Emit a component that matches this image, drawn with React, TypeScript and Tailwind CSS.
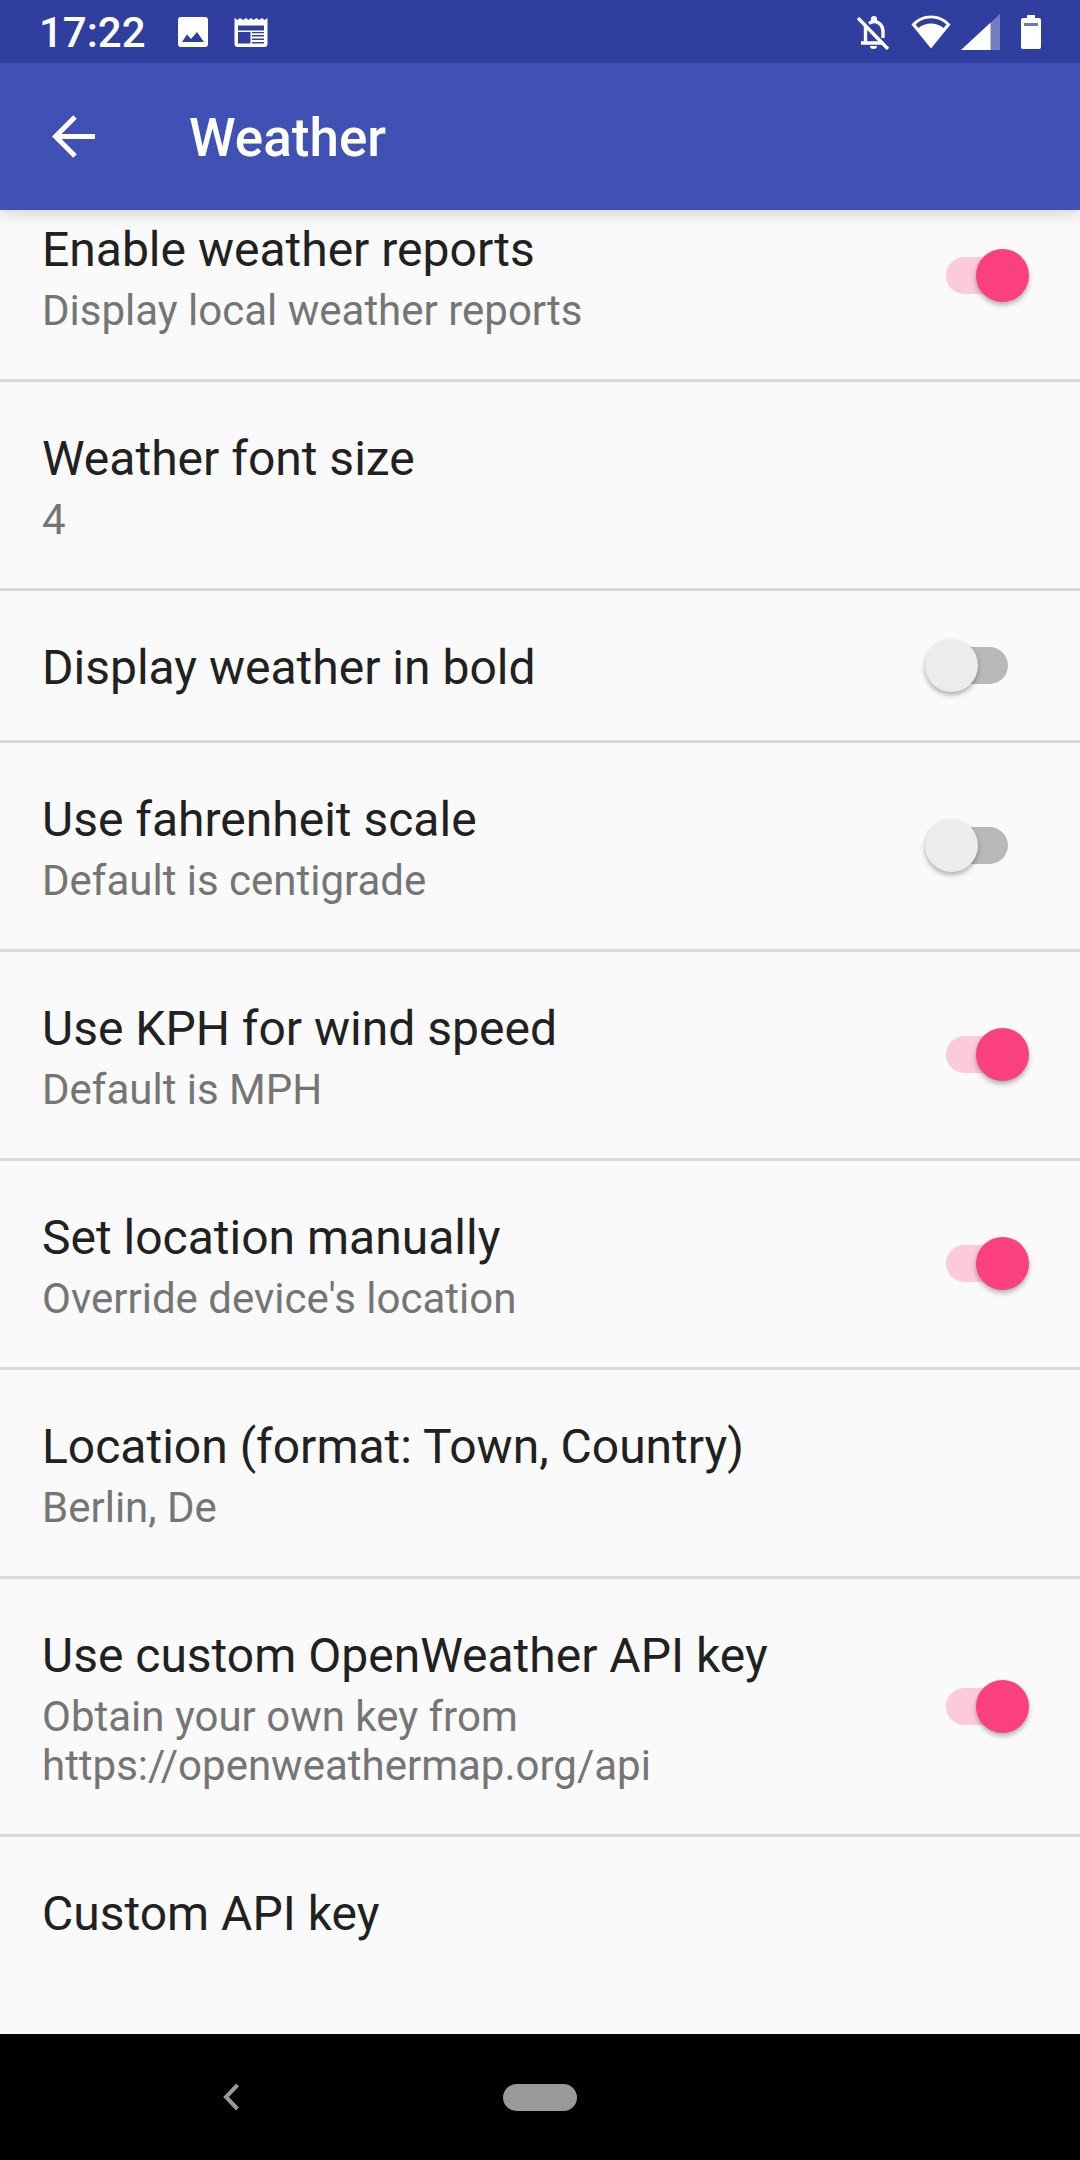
import { useLayoutEffect, useRef } from "react";

type Preference = {
  id: string;
  title: string;
  summary?: string;
  link?: string;
  checked?: boolean;
};

const preferences: Preference[] = [
  { id: "enable", title: "Enable weather reports", summary: "Display local weather reports", checked: true },
  { id: "font-size", title: "Weather font size", summary: "4" },
  { id: "bold", title: "Display weather in bold", checked: false },
  { id: "fahrenheit", title: "Use fahrenheit scale", summary: "Default is centigrade", checked: false },
  { id: "kph", title: "Use KPH for wind speed", summary: "Default is MPH", checked: true },
  { id: "manual", title: "Set location manually", summary: "Override device's location", checked: true },
  { id: "location", title: "Location (format: Town, Country)", summary: "Berlin, De" },
  {
    id: "custom-key",
    title: "Use custom OpenWeather API key",
    summary: "Obtain your own key from ",
    link: "https://openweathermap.org/api",
    checked: true,
  },
  { id: "api-key", title: "Custom API key" },
];

// Distance the list is scrolled when the screen opens.
const INITIAL_SCROLL = 37;

function StatusBar() {
  return (
    <div className="relative z-20 flex h-[63px] shrink-0 items-center bg-[#303f9f] pr-[39px] pl-[39px] text-white">
      <span className="pt-[2px] text-[42px] leading-[61px] font-medium">17:22</span>
      <svg className="ml-8 h-[30px] w-[30px]" viewBox="0 0 30 30" fill="currentColor" aria-hidden="true">
        <path
          fillRule="evenodd"
          d="M3 0h24a3 3 0 0 1 3 3v24a3 3 0 0 1-3 3H3a3 3 0 0 1-3-3V3a3 3 0 0 1 3-3ZM4 25h22l-7-10-6 7-4-4.500Z"
        />
      </svg>
      <svg className="ml-[26px] h-[30px] w-[34px]" viewBox="0 0 34 30" fill="currentColor" aria-hidden="true">
        <path
          fillRule="evenodd"
          d="M.5 1l3 2 2.500-2 3 2 3-2 2.500 2 2.500-2 2.500 2 3-2 2.500 2 3-2 2.500 2 3-2V27a3 3 0 0 1-3 3H3.500a3 3 0 0 1-3-3ZM4 8.500v5h26v-5ZM4 15v11.500h12.500V15ZM18 15v1.200h12V15ZM18 18v1.500h12V18ZM18 21.500v1.500h12v-1.500ZM18 25v1.500h12V25Z"
        />
      </svg>
      <div className="ml-auto flex items-center">
        <svg className="h-9 w-[34px]" viewBox="0 0 34 36" fill="none" stroke="currentColor" strokeWidth="3.4" aria-hidden="true">
          <path d="M2 4 32 35" />
          <path d="M9.500 12v16M5 29h22M13 9.500C19 5 27 9 27 18v6" />
          <path d="M15 4.500a3 2.500 0 0 1 6 0v3h-6ZM14 32h7a3.500 3 0 0 1-7 0Z" fill="currentColor" stroke="none" />
        </svg>
        <svg className="ml-[21px] h-9 w-10" viewBox="0 0 40 36" aria-hidden="true">
          <path
            fill="currentColor"
            fillRule="evenodd"
            d="M20 34.500.500 10.500C11-1.500 29-1.500 39.500 10.500ZM4.500 10.500 7.500 14C14 8 26 8 32.500 14l3-3.500C27 2 13 2 4.500 10.500Z"
          />
        </svg>
        <svg className="ml-[10px] h-9 w-10" viewBox="0 0 40 36" fill="currentColor" aria-hidden="true">
          <path d="M0 36 39 0V36Z" opacity="0.33" />
          <path d="M0 36 29.500 8.800V36Z" />
        </svg>
        <svg className="ml-5 h-9 w-5" viewBox="0 0 20 36" fill="currentColor" aria-hidden="true">
          <path d="M6 1h8v3h4a2 2 0 0 1 2 2v3H0V6a2 2 0 0 1 2-2h4ZM0 12h20v21a2 2 0 0 1-2 2H2a2 2 0 0 1-2-2ZM0 8h3v5H0ZM17 8h3v5h-3Z" />
          <path d="M3 9h14v3H3Z" fill="#6f79bc" />
        </svg>
      </div>
    </div>
  );
}

function AppBar() {
  return (
    <header className="relative z-10 flex h-[147px] shrink-0 items-center bg-[#3f51b5] pl-[52px] text-white shadow-[0_4px_14px_rgba(0,0,0,0.15)]">
      <button type="button" aria-label="Navigate up" className="h-[43px] w-[43px]">
        <svg className="h-full w-full" viewBox="0 0 43 43" fill="none" stroke="currentColor" strokeWidth="5" aria-hidden="true">
          <path d="M43 21.500H5M23 2 3.500 21.500 23 41" />
        </svg>
      </button>
      <h1 className="ml-[94px] pt-[3px] text-[53px] leading-[62px] font-medium">Weather</h1>
    </header>
  );
}

function Row({ item }: { item: Preference }) {
  const frame = "flex w-full items-center border-b-3 border-[#dadada] pr-[51px] pl-[42px] text-left";
  const text = (
    <span className="block min-w-0 flex-1 pt-12 pb-11">
      <span className="block text-[48px] leading-[57px] text-[#212121]">{item.title}</span>
      {item.summary && (
        <span className="mt-2 block text-[42px] leading-[49px] text-[#757575]">
          {item.summary}
          {item.link && <span className="whitespace-nowrap">{item.link}</span>}
        </span>
      )}
    </span>
  );

  if (item.checked === undefined) {
    return (
      <button type="button" className={frame}>
        {text}
      </button>
    );
  }

  return (
    <label htmlFor={item.id} className={frame}>
      {text}
      <input
        id={item.id}
        type="checkbox"
        role="switch"
        defaultChecked={item.checked}
        className="relative mx-[21px] mb-px h-[37px] w-[62px] shrink-0 appearance-none rounded-full bg-[#b9b9b9] before:absolute before:-top-2 before:-left-[21px] before:h-[53px] before:w-[53px] before:rounded-full before:bg-[#ececec] before:shadow-[0_3px_5px_rgba(0,0,0,0.3)] checked:bg-[#fbcadb] checked:before:left-[30px] checked:before:bg-[#fb407f]"
      />
    </label>
  );
}

function NavigationBar() {
  return (
    <nav className="grid h-[126px] shrink-0 grid-cols-7 items-center justify-items-center bg-black text-[#999999]">
      <button type="button" aria-label="Back" className="col-start-2">
        <svg className="h-7 w-4" viewBox="0 0 16 28" fill="none" stroke="currentColor" strokeWidth="4" aria-hidden="true">
          <path d="M14.500 2 3 14l11.500 12" />
        </svg>
      </button>
      <button type="button" aria-label="Home" className="col-start-4 h-[27px] w-[74px] rounded-full bg-[#999999]" />
    </nav>
  );
}

export default function App() {
  const list = useRef<HTMLUListElement>(null);

  useLayoutEffect(() => {
    if (list.current) list.current.scrollTop = INITIAL_SCROLL;
  }, []);

  return (
    <div className="flex h-screen flex-col overflow-hidden bg-[#fafafa] font-['Roboto',sans-serif]">
      <StatusBar />
      <AppBar />
      <main className="flex min-h-0 flex-1 flex-col pb-19">
        <ul ref={list} className="min-h-0 flex-1 overflow-y-auto [scrollbar-width:none]">
          {preferences.map((item) => (
            <li key={item.id}>
              <Row item={item} />
            </li>
          ))}
        </ul>
      </main>
      <NavigationBar />
    </div>
  );
}
